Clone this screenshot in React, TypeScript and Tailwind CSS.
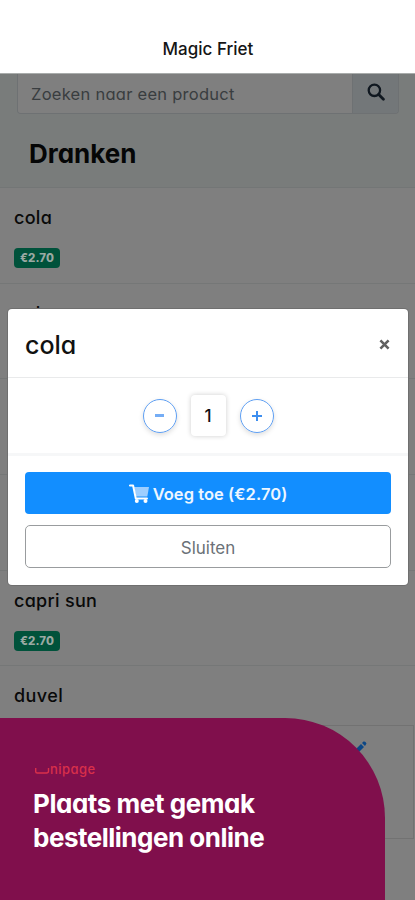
import React from "react";

const geo = "font-['Inter','Lato',sans-serif] [font-feature-settings:'cv11'] whitespace-nowrap";

function Product({ name, price, spacing }: { name?: string; price?: string; spacing?: string }) {
  return (
    <div className="h-[95.7px] shrink-0 border-b border-[#757777] px-[14px] pt-4">
      {name && <div className="text-[18px] leading-[28px] font-medium text-[#090909]"><span className={spacing}>{name}</span></div>}
      {price && (
        <div className="mt-4 flex h-5 w-[46px] items-center justify-center rounded-[4px] bg-[#00523b] pt-[2px] text-[11.5px] leading-none font-extrabold tracking-[0.1px] text-[#9aa9a3]">
          {price}
        </div>
      )}
    </div>
  );
}

function Cart() {
  return (
    <svg className="h-[19px] w-[20px]" viewBox="0 0 20 19" fill="none">
      <path d="M5 3H20L18.3 12.5H7Z" fill="#9dceff" />
      <path d="M.9 1.5H4.1L6.8 14.6H18" stroke="#fff" strokeWidth="2" strokeLinecap="round" strokeLinejoin="round" />
      <circle cx="7.8" cy="17" r="2" fill="#fff" />
      <circle cx="16.5" cy="17" r="2" fill="#fff" />
    </svg>
  );
}

export default function App() {
  return (
    <div className={`relative flex h-[900px] w-full flex-col overflow-hidden bg-[#7f7f7f] ${geo}`}>
      <header className="flex h-[74px] shrink-0 items-end justify-center border-b border-[#a9acab] bg-white pl-[1px] pb-[12px] text-[17px] leading-6 font-medium text-[#151515] [font-feature-settings:normal]">
        <span>Magic Friet</span>
      </header>
      <section className="h-[114px] shrink-0 border-b border-[#737676] bg-[#797c7b] pr-[16px] pl-[17px]">
        <div className="flex h-[40px] overflow-hidden rounded-b-[4px] border border-t-0 border-[#6e7173]">
          <div className="flex-1 bg-[#7f7f7f] pt-[6px] pl-[13px] text-[16.5px] leading-7 text-[#393d40]">
            <span className="tracking-[0.26px]">Zoeken naar een product</span>
          </div>
          <div className="flex w-[46px] justify-center border-l border-[#6e7173] bg-[#737779] pt-[9px]">
            <svg className="h-[18px] w-[18px]" viewBox="0 0 18 18" fill="none" stroke="#101820">
              <circle cx="7.4" cy="7.3" r="5.7" strokeWidth="2.3" />
              <path d="M11.7 11.6L16.4 16.3" strokeWidth="2.8" strokeLinecap="round" />
            </svg>
          </div>
        </div>
        <h1 className="mt-[22px] pl-3 text-[26px] leading-9 font-bold text-[#050606]">Dranken</h1>
      </section>

      <main className="flex flex-col">
        <Product name="cola" price="€2.70" spacing="tracking-[0.3px]" />
        <Product name="cola" spacing="tracking-[0.3px]" />
        <Product />
        <Product />
        <Product name="capri sun" price="€2.70" spacing="tracking-[0.3px]" />
        <div className="shrink-0 pt-4">
          <div className="pl-[14px] text-[18px] leading-[28px] font-medium text-[#090909]"><span className="tracking-[0.4px]">duvel</span></div>
          <div className="mt-[15px] mr-[1px] flex h-[114px] justify-end border border-[#727272] pt-[15px] pr-[46px]">
            <svg className="h-[15px] w-[15px]" viewBox="0 0 15 15" fill="#0b4786">
              <path d="M1 11L9 3L12 6L4 14L0 15ZM10 2L11.5.6Q12.5 0 13.5 1L14.5 2.5L13 5Z" />
            </svg>
          </div>
        </div>
      </main>

      <div className="absolute top-[309px] left-[8px] flex h-[276px] w-[400px] flex-col overflow-hidden rounded-[4px] bg-white shadow-[0_0_0_1px_#6f6f6f]">
        <div className="flex h-[69px] shrink-0 items-center justify-between border-b border-[#e9eaeb] pr-[18px] pl-[17px]">
          <h2 className="pt-[4px] text-[25px] leading-8 font-medium text-[#111]">cola</h2>
          <svg className="mt-[3px] h-[11px] w-[11px]" viewBox="0 0 11 11" stroke="#606060" strokeWidth="2.6">
            <path d="M1.4 1.4L9.6 9.6M9.6 1.4L1.4 9.6" />
          </svg>
        </div>
        <div className="flex h-[78px] shrink-0 items-center justify-center gap-[14px] border-b-[3px] border-[#f6f7f8]">
          <div className="flex h-[34px] w-[34px] items-center justify-center rounded-full border-[1.5px] border-[#5f9ff2] shadow-[0_2px_5px_#0002]">
            <div className="h-[3px] w-[9px] bg-[#75adf5]" />
          </div>
          <div className="flex h-[41px] w-[35px] items-center justify-center rounded-[4px] bg-white pt-[3px] text-[17px] font-medium text-[#111] shadow-[0_0_5px_#0003]">
            1
          </div>
          <div className="flex h-[34px] w-[34px] items-center justify-center rounded-full border-[1.5px] border-[#5f9ff2] shadow-[0_2px_5px_#0002]">
            <svg className="h-[10px] w-[10px]" viewBox="0 0 10 10" stroke="#3d8eef" strokeWidth="2">
              <path d="M5 0V10M0 5H10" />
            </svg>
          </div>
        </div>
        <div className="flex flex-col gap-[11px] px-[17px] pt-[16px]">
          <button className="flex h-[42px] items-center justify-center gap-[4px] rounded-[4px] bg-[#128eff] text-[16.5px] font-semibold text-[#edf6ff]">
            <Cart />
            <span className="pt-[3px] tracking-[0.06px]">Voeg toe (€2.70)</span>
          </button>
          <button className="flex h-[43px] items-center justify-center rounded-[5px] border-[1.5px] border-[#999c9e] pt-[4px] text-[17px] text-[#6b7177]">
            Sluiten
          </button>
        </div>
      </div>

      <div className="absolute bottom-0 left-0 h-[182px] w-[385px] rounded-tr-[100px] bg-[#800f4c] pt-[42px] pl-[33px]">
        <div className="flex h-[18px] items-center text-[13px] leading-[18px] font-medium text-[#d9304a]">
          <svg className="mt-[3px] ml-[2px] h-[6px] w-[15px]" viewBox="0 0 15 6" fill="none" stroke="#d9304a" strokeWidth="1.4">
            <path d="M.7 0V3.5Q.7 5 2.2 5H11.5Q13.5 5 13.5 3V0" />
          </svg>
          <span className="tracking-[0.45px]">nipage</span>
        </div>
        <div className="mt-[9px] text-[26px] leading-[34px] font-bold text-white">
          <div><span className="tracking-[-0.45px]">Plaats met gemak</span></div>
          <div><span className="tracking-[-0.5px]">bestellingen online</span></div>
        </div>
      </div>
    </div>
  );
}
